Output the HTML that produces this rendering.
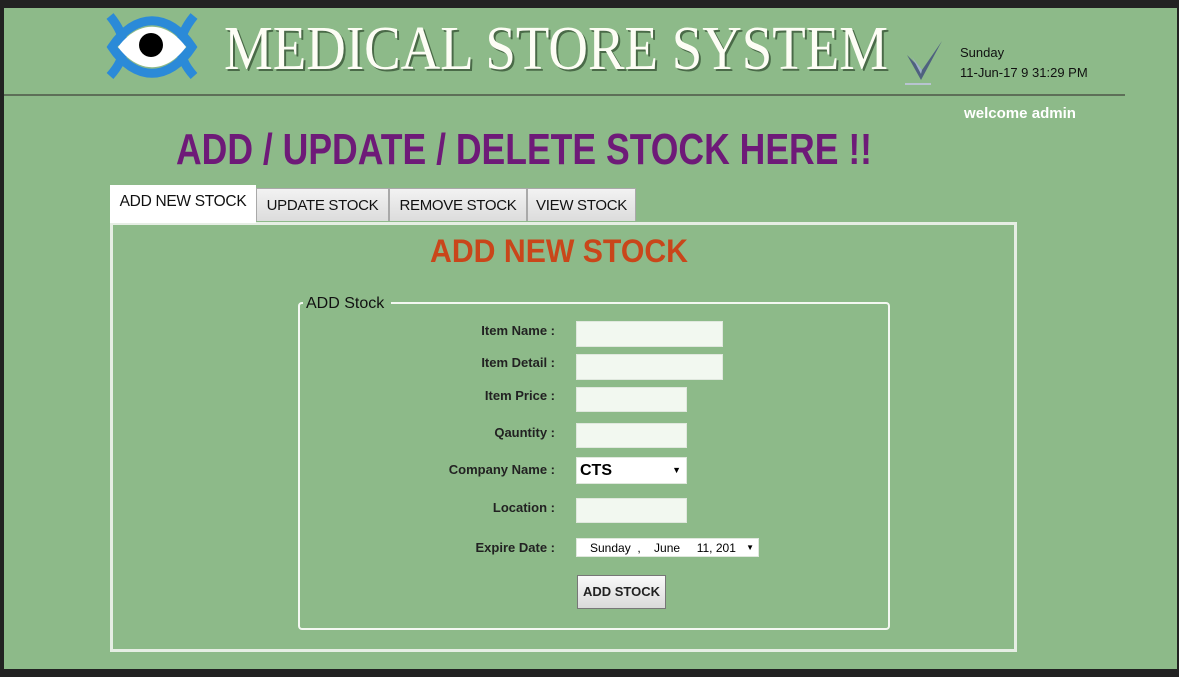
<!DOCTYPE html>
<html><head><meta charset="utf-8"><style>
html,body{margin:0;padding:0;width:1179px;height:677px;overflow:hidden;background:#222;font-family:"Liberation Sans",sans-serif}
.g{position:absolute;left:4px;top:8px;width:1173px;height:661px;background:#8dba89}
.a{position:absolute}
.tab{position:absolute;top:188px;height:33px;background:linear-gradient(#f2f2f2,#dcdcdc);border:1px solid #a9a9a9;border-bottom:none;font-size:15px;letter-spacing:-0.3px;white-space:nowrap;line-height:33px;text-align:center;color:#111;box-sizing:border-box}
.lbl{position:absolute;right:624px;font-size:13px;font-weight:bold;color:#222;white-space:nowrap}
.in{position:absolute;left:576px;background:#f2f8f0;border:1px solid #e0e8de;box-sizing:border-box}
</style></head><body>
<div class="g"></div>
<svg class="a" style="left:0;top:0" width="1179" height="677">
  <g fill="none" stroke="#2b8ad8" stroke-width="9">
    <path d="M110 16 C128 38 128 56 110 76"/>
    <path d="M194 16 C176 38 176 56 194 76"/>
    <path d="M112 47 C135 12 169 12 192 47 C169 82 135 82 112 47 Z"/>
  </g>
  <path d="M118 47 C138 20 166 20 186 47 C166 74 138 74 118 47 Z" fill="#fff"/>
  <circle cx="151" cy="45" r="12" fill="#000"/>
  <text x="226" y="71" textLength="664" lengthAdjust="spacingAndGlyphs" font-family="Liberation Serif" font-size="62" fill="#4a6a48">MEDICAL STORE SYSTEM</text>
  <text x="224" y="69" textLength="664" lengthAdjust="spacingAndGlyphs" font-family="Liberation Serif" font-size="62" fill="#fdfdf5">MEDICAL STORE SYSTEM</text>
  <path d="M907 55 L921 80 L942 41 L922 70 Z" fill="#4f6180"/>
  <path d="M912 57 L921 74 L922 70 Z" fill="#9fb0c8"/>
  <rect x="905" y="83" width="26" height="2" fill="#b8c4d0"/>
  <text x="960" y="57" font-size="13" fill="#111">Sunday</text>
  <text x="960" y="77" font-size="13" fill="#111">11-Jun-17 9 31:29 PM</text>
  <rect x="4" y="94" width="1121" height="2" fill="#5d6f58"/>
  <text x="964" y="118" textLength="112" lengthAdjust="spacingAndGlyphs" font-size="15" font-weight="bold" fill="#fff">welcome admin</text>
  <text x="176" y="164" textLength="696" lengthAdjust="spacingAndGlyphs" font-size="44" font-weight="bold" fill="#6e1a78">ADD / UPDATE / DELETE STOCK HERE !!</text>
  <rect x="111.5" y="223.5" width="904" height="427" fill="none" stroke="#e6eee4" stroke-width="3"/>
  <text x="430" y="262" textLength="258" lengthAdjust="spacingAndGlyphs" font-size="32" font-weight="bold" fill="#c9461a">ADD NEW STOCK</text>
  <rect x="299" y="303" width="590" height="326" rx="3" fill="none" stroke="#f4f8f2" stroke-width="2"/>
  <rect x="303" y="294" width="88" height="16" fill="#8dba89"/>
  <text x="306" y="308" font-size="16" fill="#111">ADD Stock</text>
</svg>
<div class="a" style="left:110px;top:185px;width:146px;height:38px;background:#fff;font-size:15.5px;letter-spacing:-0.3px;white-space:nowrap;line-height:34px;text-align:center;color:#111">ADD NEW STOCK</div>
<div class="tab" style="left:256px;width:133px">UPDATE STOCK</div>
<div class="tab" style="left:389px;width:138px">REMOVE STOCK</div>
<div class="tab" style="left:527px;width:109px">VIEW STOCK</div>

<div class="lbl" style="top:323px">Item Name :</div>
<div class="lbl" style="top:355px">Item Detail :</div>
<div class="lbl" style="top:388px">Item Price :</div>
<div class="lbl" style="top:425px">Qauntity :</div>
<div class="lbl" style="top:462px">Company Name :</div>
<div class="lbl" style="top:500px">Location :</div>
<div class="lbl" style="top:540px">Expire Date :</div>

<div class="in" style="top:321px;width:147px;height:26px"></div>
<div class="in" style="top:354px;width:147px;height:26px"></div>
<div class="in" style="top:387px;width:111px;height:25px"></div>
<div class="in" style="top:423px;width:111px;height:25px"></div>
<div class="in" style="top:457px;width:111px;height:27px;background:#fff;font-size:16px;font-weight:bold;line-height:25px;padding-left:3px">CTS<span style="position:absolute;right:5px;top:0;font-size:9px">▼</span></div>
<div class="in" style="top:498px;width:111px;height:25px"></div>
<div class="in" style="top:538px;width:183px;height:19px;background:#fff;font-size:12px;line-height:18px;padding-left:13px;white-space:pre">Sunday  ,    June     11, 201<span style="position:absolute;right:4px;top:0;font-size:8px">▼</span></div>
<div class="a" style="left:577px;top:575px;width:89px;height:34px;box-sizing:border-box;border:1px solid #777;background:linear-gradient(#fafafa,#dadada);font-size:13px;font-weight:bold;line-height:32px;text-align:center;color:#222">ADD STOCK</div>
</body></html>
